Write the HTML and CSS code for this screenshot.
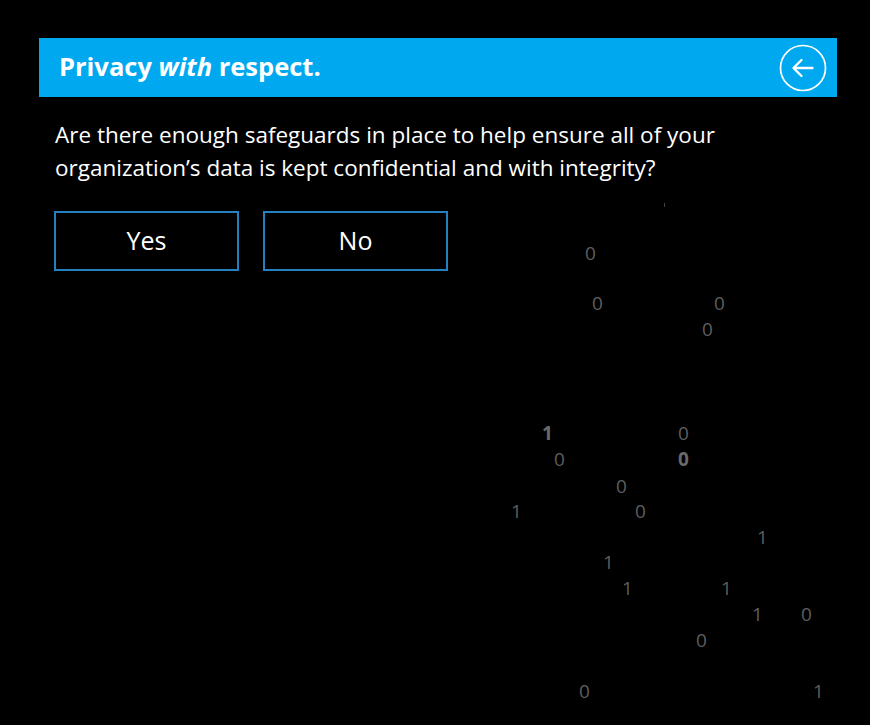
FILE: index.html
```html
<!DOCTYPE html>
<html lang="en">
<head>
<meta charset="utf-8">
<title>Privacy with respect</title>
<link rel="stylesheet" href="styles.css">
</head>
<body>
<div class="stage">
  <header class="bar">
    <h1 class="title">Privacy <em>with</em> respect.</h1>
    <button class="back" aria-label="Back">
      <svg width="48" height="48" viewBox="0 0 48 48">
        <circle cx="24" cy="24" r="22.5" fill="none" stroke="#fff" stroke-width="1.7"/>
        <path d="M33.5 24H14.5M22.5 16L14.5 24l8 8" fill="none" stroke="#fff" stroke-width="2.3" stroke-linecap="round" stroke-linejoin="round"/>
      </svg>
    </button>
  </header>
  <p class="question">Are there enough safeguards in place to help ensure all of your organization’s data is kept confidential and with integrity?</p>
  <div class="answers">
    <button class="answer">Yes</button>
    <button class="answer">No</button>
  </div>
  <div class="binary" aria-hidden="true">
    <span class="tick" style="left:664px;top:203px"></span>
    <span class="d" style="left:585px;top:244px">0</span>
    <span class="d" style="left:592px;top:294px">0</span>
    <span class="d" style="left:714px;top:294px">0</span>
    <span class="d" style="left:702px;top:320px">0</span>
    <span class="d b" style="left:542px;top:424px">1</span>
    <span class="d" style="left:678px;top:424px">0</span>
    <span class="d" style="left:554px;top:450px">0</span>
    <span class="d b" style="left:678px;top:450px">0</span>
    <span class="d" style="left:616px;top:477px">0</span>
    <span class="d" style="left:511px;top:502px">1</span>
    <span class="d" style="left:635px;top:502px">0</span>
    <span class="d" style="left:757px;top:528px">1</span>
    <span class="d" style="left:603px;top:553px">1</span>
    <span class="d" style="left:622px;top:579px">1</span>
    <span class="d" style="left:721px;top:579px">1</span>
    <span class="d" style="left:752px;top:605px">1</span>
    <span class="d" style="left:801px;top:605px">0</span>
    <span class="d" style="left:696px;top:631px">0</span>
    <span class="d" style="left:579px;top:682px">0</span>
    <span class="d" style="left:813px;top:682px">1</span>
  </div>
</div>
</body>
</html>
```
FILE: styles.css
```css
* { box-sizing: border-box; }
html, body {
  margin: 0;
  padding: 0;
  background: #000;
}
body {
  width: 870px;
  height: 725px;
  overflow: hidden;
  font-family: "Open Sans", "Noto Sans", sans-serif;
  color: #fff;
}
.stage {
  position: relative;
  width: 870px;
  height: 725px;
  padding: 38px 33px 0 39px;
}
.bar {
  position: relative;
  z-index: 1;
  height: 59px;
  background: #00a9ef;
  display: flex;
  align-items: center;
  justify-content: space-between;
  padding: 0 10px 0 20px;
}
.title {
  margin: 0;
  font-size: 25.5px;
  font-weight: 700;
  line-height: 1;
  padding-bottom: 1px;
}
.title em {
  font-style: italic;
}
.back {
  width: 48px;
  height: 48px;
  padding: 0;
  margin: 0;
  border: 0;
  background: transparent;
  display: flex;
}
.question {
  position: relative;
  z-index: 1;
  margin: 0;
  padding: 21px 0 0 16px;
  font-size: 22.5px;
  line-height: 33px;
  width: 760px;
}
.answers {
  position: relative;
  z-index: 1;
  display: flex;
  gap: 24px;
  padding: 27px 0 0 15px;
}
.answer {
  width: 185px;
  height: 60px;
  background: #000;
  border: 2px solid #2480c0;
  color: #fff;
  font-family: "Open Sans", "Noto Sans", sans-serif;
  font-size: 25px;
  padding: 0 0 2px 0;
}
.binary {
  position: absolute;
  inset: 0;
}
.d {
  position: absolute;
  font-size: 19px;
  line-height: 18px;
  color: #5e5e5e;
}
.d.b {
  font-weight: 700;
  color: #6a6a6a;
}
.tick {
  position: absolute;
  width: 1px;
  height: 4px;
  background: #444;
}
```
